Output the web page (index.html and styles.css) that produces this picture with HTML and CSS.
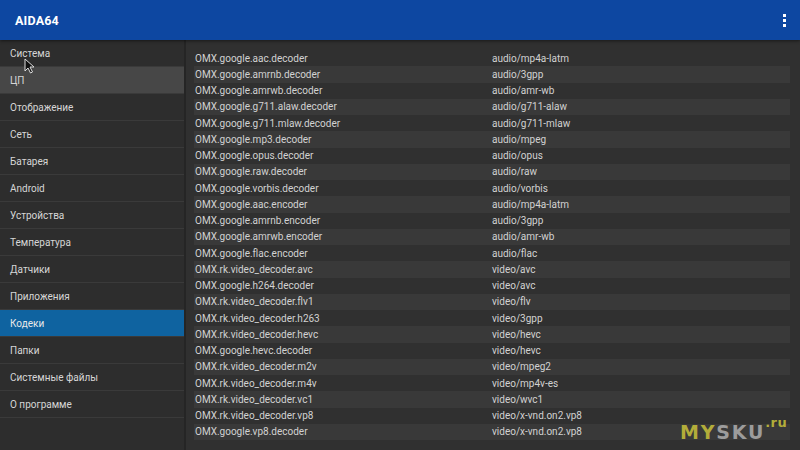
FILE: index.html
```html
<!DOCTYPE html>
<html>
<head>
<meta charset="utf-8">
<link rel="stylesheet" href="styles.css">
</head>
<body>
<div class="app">
  <header class="topbar">
    <span class="title">AIDA64</span>
    <span class="menu"><i></i><i></i><i></i></span>
  </header>
  <div class="main">
    <nav class="side">
      <div class="item">Система</div>
      <div class="item hover">ЦП</div>
      <div class="item">Отображение</div>
      <div class="item">Сеть</div>
      <div class="item">Батарея</div>
      <div class="item">Android</div>
      <div class="item">Устройства</div>
      <div class="item">Температура</div>
      <div class="item">Датчики</div>
      <div class="item">Приложения</div>
      <div class="item active">Кодеки</div>
      <div class="item">Папки</div>
      <div class="item">Системные файлы</div>
      <div class="item">О программе</div>
    </nav>
    <section class="content">
      <div class="row"><span>OMX.google.aac.decoder</span><span>audio/mp4a-latm</span></div>
      <div class="row"><span>OMX.google.amrnb.decoder</span><span>audio/3gpp</span></div>
      <div class="row"><span>OMX.google.amrwb.decoder</span><span>audio/amr-wb</span></div>
      <div class="row"><span>OMX.google.g711.alaw.decoder</span><span>audio/g711-alaw</span></div>
      <div class="row"><span>OMX.google.g711.mlaw.decoder</span><span>audio/g711-mlaw</span></div>
      <div class="row"><span>OMX.google.mp3.decoder</span><span>audio/mpeg</span></div>
      <div class="row"><span>OMX.google.opus.decoder</span><span>audio/opus</span></div>
      <div class="row"><span>OMX.google.raw.decoder</span><span>audio/raw</span></div>
      <div class="row"><span>OMX.google.vorbis.decoder</span><span>audio/vorbis</span></div>
      <div class="row"><span>OMX.google.aac.encoder</span><span>audio/mp4a-latm</span></div>
      <div class="row"><span>OMX.google.amrnb.encoder</span><span>audio/3gpp</span></div>
      <div class="row"><span>OMX.google.amrwb.encoder</span><span>audio/amr-wb</span></div>
      <div class="row"><span>OMX.google.flac.encoder</span><span>audio/flac</span></div>
      <div class="row"><span>OMX.rk.video_decoder.avc</span><span>video/avc</span></div>
      <div class="row"><span>OMX.google.h264.decoder</span><span>video/avc</span></div>
      <div class="row"><span>OMX.rk.video_decoder.flv1</span><span>video/flv</span></div>
      <div class="row"><span>OMX.rk.video_decoder.h263</span><span>video/3gpp</span></div>
      <div class="row"><span>OMX.rk.video_decoder.hevc</span><span>video/hevc</span></div>
      <div class="row"><span>OMX.google.hevc.decoder</span><span>video/hevc</span></div>
      <div class="row"><span>OMX.rk.video_decoder.m2v</span><span>video/mpeg2</span></div>
      <div class="row"><span>OMX.rk.video_decoder.m4v</span><span>video/mp4v-es</span></div>
      <div class="row"><span>OMX.rk.video_decoder.vc1</span><span>video/wvc1</span></div>
      <div class="row"><span>OMX.rk.video_decoder.vp8</span><span>video/x-vnd.on2.vp8</span></div>
      <div class="row"><span>OMX.google.vp8.decoder</span><span>video/x-vnd.on2.vp8</span></div>
    </section>
  </div>
  <svg class="cursor" width="12" height="16" viewBox="0 0 12 16"><path d="M1 1 L1 13 L4 10 L6.5 15 L8.5 14 L6 9 L10 9 Z" fill="#111" stroke="#ddd" stroke-width="1"/></svg>
  <div class="watermark"><span class="my">MY</span><span class="sku">SKU</span><span class="ru">.ru</span></div>
</div>
</body>
</html>
```

FILE: styles.css
```css
* { box-sizing: border-box; }
html, body { margin: 0; padding: 0; }
body {
  width: 800px;
  height: 450px;
  overflow: hidden;
  background: #303030;
  font-family: Roboto, "Noto Sans", sans-serif;
}
.app {
  position: relative;
  width: 800px;
  height: 450px;
  display: flex;
  flex-direction: column;
}
.topbar {
  height: 40px;
  flex: none;
  background: #0d47a1;
  display: flex;
  align-items: center;
  justify-content: space-between;
  padding: 0 14px 0 15px;
  box-shadow: 0 1px 3px rgba(0,0,0,0.5);
  position: relative;
  z-index: 1;
}
.title {
  color: #fff;
  font-weight: bold;
  font-size: 12.5px;
  letter-spacing: 0.2px;
}
.menu {
  display: flex;
  flex-direction: column;
  gap: 2px;
}
.menu i {
  width: 3px;
  height: 3px;
  background: #fff;
  display: block;
}
.main {
  flex: 1;
  display: flex;
  min-height: 0;
}
.side {
  width: 186px;
  flex: none;
  background: #2d2d2d;
  border-right: 2px solid #252525;
}
.item {
  height: 27px;
  line-height: 26px;
  padding-top: 1px;
  padding-left: 10px;
  font-size: 10px;
  color: #d6d6d6;
  border-bottom: 1px solid #3a3a3a;
}
.item.hover { background: #474747; }
.item.active { background: #0f63a0; color: #e8e8e8; }
.content {
  flex: 1;
  background: #303030;
  padding: 10px 10px 0 8px;
}
.row {
  height: 16.25px;
  line-height: 16.25px;
  padding-top: 0.5px;
  display: flex;
  font-size: 10px;
  color: #d2d2d2;
  padding-left: 1px;
}
.row:nth-child(even) { background: #393939; }
.row span:first-child { width: 297px; }
.cursor {
  position: absolute;
  left: 24px;
  top: 58px;
}
.watermark {
  position: absolute;
  left: 680px;
  top: 419px;
  font-family: "DejaVu Sans", sans-serif;
  font-weight: bold;
  font-size: 19px;
  letter-spacing: 1.8px;
  line-height: 26px;
}
.my { color: #b3ad3a; }
.sku { color: #9c9c9c; }
.ru {
  color: #b3ad3a;
  font-size: 13px;
  letter-spacing: 0.5px;
  position: relative;
  top: -12px;
  margin-left: 0;
}
```
